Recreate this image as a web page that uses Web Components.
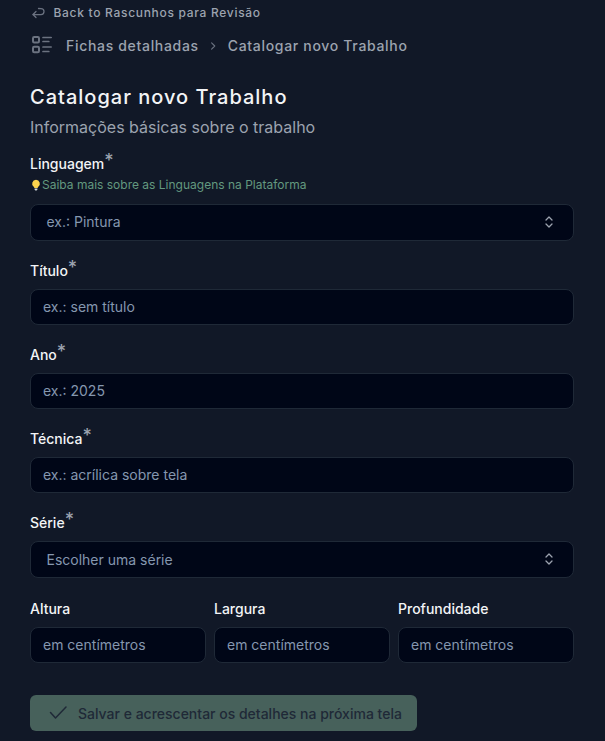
<!DOCTYPE html>
<html lang="pt"><head><meta charset="utf-8"><title>Catalogar novo Trabalho</title>
<style>
html,body{margin:0;padding:0;background:#111827;}
body{font-family:Inter,"Liberation Sans",sans-serif;height:741px;overflow:hidden;}
</style></head><body>
<catalog-page></catalog-page>
<script>
function attrEl(name,css,fn){
  customElements.define(name,class extends HTMLElement{
    connectedCallback(){ if(this.shadowRoot) return; const s=this.attachShadow({mode:'open'});
      s.innerHTML='<style>'+css+'</style>'+fn(this);}
  });
}
attrEl('back-link',`:host{display:flex;align-items:center;gap:7.5px;height:16px;color:#9ca3af;font-size:12px;font-weight:500;letter-spacing:.7px}
svg{display:block;width:15px;height:15px;color:#6b7280;flex:none}`,
()=>`<svg viewBox="0 0 24 24" fill="none" stroke="currentColor" stroke-width="2" stroke-linecap="round" stroke-linejoin="round"><path d="M8 10.4 3.2 15.2 8 20"/><path d="M3.2 15.2H16a4.8 4.8 0 0 0 0-9.6h-4"/></svg><span>Back to Rascunhos para Revisão</span>`);
attrEl('bread-crumb',`:host{display:flex;align-items:center;box-sizing:border-box;height:24px;padding-bottom:1px;color:#9ca3af;font-size:14px;font-weight:500;letter-spacing:.68px}
svg{display:block;flex:none}
.ic{width:22px;height:22px;color:#6b7280;margin:1px 14px 0 0}
.ch{width:14px;height:14px;color:#6b7280;margin:0 8px 0 7px}`,
()=>`<svg class="ic" viewBox="0 0 22 22" fill="none" stroke="currentColor" stroke-width="2" stroke-linecap="round" stroke-linejoin="round"><rect x="3" y="2" width="6" height="5.5" rx="1.2"/><rect x="3" y="11.7" width="6" height="5.5" rx="1.2"/><path stroke-width="1.7" d="M13 2.5H21.2M13 6.5H18.8M13 12H21.2M13 16.5H18.8"/></svg><span>Fichas detalhadas</span><svg class="ch" viewBox="0 0 20 20" fill="none" stroke="currentColor" stroke-width="1.6" stroke-linecap="round" stroke-linejoin="round"><path d="M8 5.5 12.5 10 8 14.5"/></svg><span>Catalogar novo Trabalho</span>`);
attrEl('field-label',`:host{display:block;color:#f3f4f6;font-size:14px;font-weight:500;line-height:20px}
sup{color:#9ca3af;font-size:18px;font-weight:500;line-height:0;vertical-align:baseline;position:relative;top:-2px;margin-left:0}`,
el=>`<slot></slot>${el.hasAttribute('required')?'<sup>*</sup>':''}`);
attrEl('text-box',`:host{display:flex;align-items:center;box-sizing:border-box;height:36px;padding:0 12px 1px;background:#000617;border:1px solid #1f2937;border-radius:8px;color:#8597af;font-size:14px}`,
()=>`<slot></slot>`);
attrEl('select-box',`:host{display:flex;align-items:center;justify-content:space-between;box-sizing:border-box;height:37px;padding:0 16px var(--pb,1px) 15.5px;background:#000617;border:1px solid #1f2937;border-radius:8px;color:#8597af;font-size:14px}
svg{display:block;width:14px;height:14px;color:#9ca3af;flex:none;margin-right:1px}`,
()=>`<span><slot></slot></span><svg viewBox="0 0 14 14" fill="none" stroke="currentColor" stroke-width="1.3" stroke-linecap="round" stroke-linejoin="round"><path d="M4 5 7 2 10 5"/><path d="M4 9 7 12 10 9"/></svg>`);
attrEl('form-field',`:host{display:flex;flex-direction:column;min-width:0}
::slotted(field-label){margin-bottom:8px}`,()=>`<slot></slot>`);
attrEl('save-button',`:host{display:inline-flex;align-items:center;box-sizing:border-box;height:36px;padding:0 15px 0 18px;background:#47615b;border-radius:6px;color:#1f2937;font-size:14px;font-weight:500}
svg{display:block;width:20px;height:20px;margin-right:10px;color:#1f2937;flex:none}`,
()=>`<svg viewBox="0 0 20 20" fill="none" stroke="currentColor" stroke-width="1.5" stroke-linecap="round" stroke-linejoin="round"><path d="M2.5 9.5 7.5 15 18 4"/></svg><slot></slot>`);
attrEl('catalog-page',`:host{display:block;padding:4px 31px 0 30px;box-sizing:border-box;width:605px}
back-link{margin-left:1px}
bread-crumb{margin-top:14px}
h1{margin:25px 0 0;font-size:20px;line-height:28px;font-weight:500;color:#f3f4f6;letter-spacing:1px}
p{margin:4px 0 0;font-size:16px;line-height:24px;color:#9ca3af}
.hint{display:flex;align-items:center;font-size:12px;line-height:16px;color:#63997f;margin:-5px 0 11px}
.hint svg{display:block;width:12px;height:12px;flex:none}
form-field{margin-top:20px}
form-field.first{margin-top:15px}
.first select-box{--pb:2px}
.dims{display:grid;grid-template-columns:repeat(3,1fr);gap:8px;margin-top:21px}
.dims form-field{margin:0}
save-button{margin-top:32px}`,
()=>`
<back-link></back-link>
<bread-crumb></bread-crumb>
<h1>Catalogar novo Trabalho</h1>
<p>Informações básicas sobre o trabalho</p>
<form-field class="first"><field-label required>Linguagem</field-label>
<div class="hint"><svg viewBox="0 0 12 12"><path d="M6 .8a3.9 3.9 0 0 0-2.3 7c.4.3.6.7.6 1.1h3.4c0-.4.2-.8.6-1.1A3.9 3.9 0 0 0 6 .8z" fill="#fcd34d"/><path d="M4.6 9.6h2.8v1.2L6.6 11.6H5.4L4.6 10.8z" fill="#d1d5db"/></svg><span>Saiba mais sobre as Linguagens na Plataforma</span></div>
<select-box>ex.: Pintura</select-box></form-field>
<form-field><field-label required>Título</field-label><text-box>ex.: sem título</text-box></form-field>
<form-field><field-label required>Ano</field-label><text-box>ex.: 2025</text-box></form-field>
<form-field><field-label required>Técnica</field-label><text-box>ex.: acrílica sobre tela</text-box></form-field>
<form-field><field-label required>Série</field-label><select-box>Escolher uma série</select-box></form-field>
<div class="dims">
<form-field><field-label>Altura</field-label><text-box>em centímetros</text-box></form-field>
<form-field><field-label>Largura</field-label><text-box>em centímetros</text-box></form-field>
<form-field><field-label>Profundidade</field-label><text-box>em centímetros</text-box></form-field>
</div>
<save-button>Salvar e acrescentar os detalhes na próxima tela</save-button>`);
</script>
</body></html>
